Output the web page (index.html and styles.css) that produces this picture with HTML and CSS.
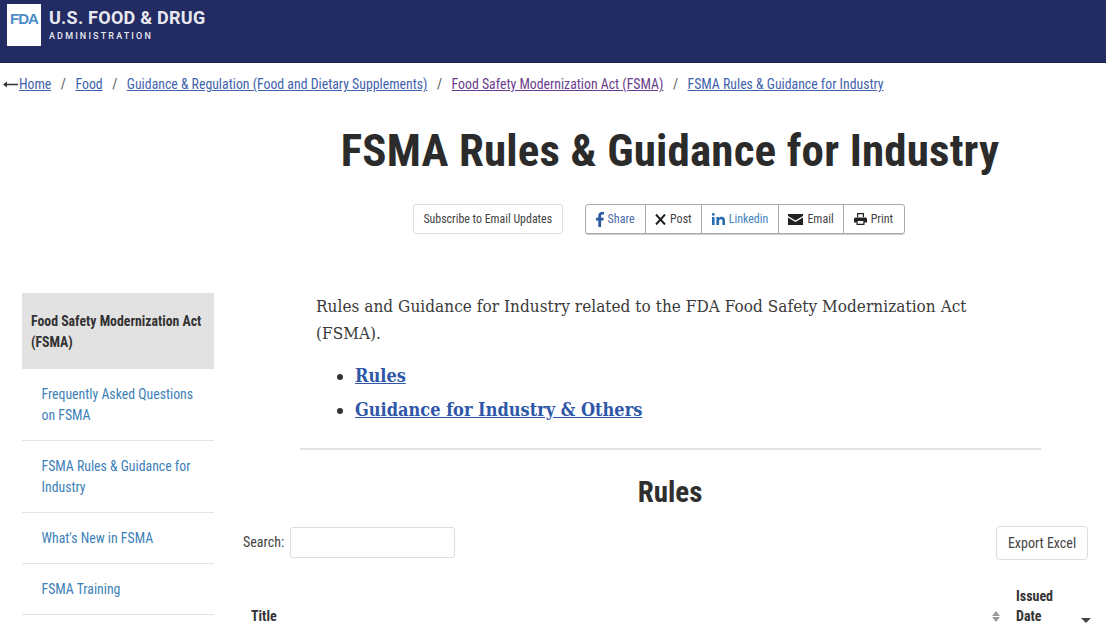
FILE: index.html
```html
<!DOCTYPE html>
<html lang="en">
<head>
  <meta charset="UTF-8">
  <title>FSMA Rules &amp; Guidance for Industry</title>
  <link rel="stylesheet" href="styles.css">
</head>
<body>
  <header class="site-header">
    <div class="logo-box">FDA</div>
    <div class="logo-text">
      <div class="logo-title">U.S. FOOD &amp; DRUG</div>
      <div class="logo-sub">ADMINISTRATION</div>
    </div>
  </header>

  <nav class="breadcrumb">
    <svg class="back-arrow" width="15" height="7" viewBox="0 0 15 7"><path fill="#333" d="M0 3.500L4 .5v2.200h11v1.600H4v2.200z"/></svg>
    <a href="#">Home</a><span class="sep">/</span>
    <a href="#">Food</a><span class="sep">/</span>
    <a href="#">Guidance &amp; Regulation (Food and Dietary Supplements)</a><span class="sep">/</span>
    <a href="#" class="visited">Food Safety Modernization Act (FSMA)</a><span class="sep">/</span>
    <a href="#">FSMA Rules &amp; Guidance for Industry</a>
  </nav>

  <h1 class="page-title">FSMA Rules &amp; Guidance for Industry</h1>

  <div class="share-row">
    <a href="#" class="subscribe">Subscribe to Email Updates</a>
    <div class="share-group">
      <a href="#" class="share-btn blue">
        <svg width="8" height="15" viewBox="0 0 8 15"><path fill="#2b5a9e" d="M2.300 15V8.400H0V5.800h2.300V3.800C2.300 1.400 3.700 0 5.900 0c1 0 1.800.1 2.100.1v2.400H6.500c-1.100 0-1.400.6-1.400 1.400v1.900h2.700l-.4 2.600H5.100V15z"/></svg>
        Share</a>
      <a href="#" class="share-btn">
        <svg width="11" height="11" viewBox="0 0 11 11"><path fill="none" stroke="#222" stroke-width="2" d="M1 .5l9 10M10 .5l-9 10"/></svg>
        Post</a>
      <a href="#" class="share-btn sky">
        <svg width="13" height="12" viewBox="0 0 13 12"><path fill="#2b6cb0" d="M0 4h2.600v8H0zM1.300 0a1.400 1.400 0 1 1 0 2.800 1.400 1.400 0 0 1 0-2.800zM4.400 4h2.500v1.100c.5-.8 1.400-1.300 2.600-1.300 2.600 0 3.500 1.500 3.500 4V12h-2.600V8.300c0-1.200-.3-2.100-1.500-2.100s-1.800.9-1.800 2.100V12H4.400z"/></svg>
        Linkedin</a>
      <a href="#" class="share-btn">
        <svg width="15" height="11" viewBox="0 0 15 11"><path fill="#222" d="M0 0h15v2L7.500 6.500 0 2zM0 3.500l7.500 4.500L15 3.500V11H0z"/></svg>
        Email</a>
      <a href="#" class="share-btn">
        <svg width="13" height="12" viewBox="0 0 13 12"><path fill="#222" d="M3 0h7v4H8.800V1.200H4.200V4H3zM1.500 4.500h10A1.500 1.500 0 0 1 13 6v3.500h-2.500V12h-8V9.500H0V6a1.500 1.500 0 0 1 1.500-1.500zM3.700 8v2.800h5.600V8z"/></svg>
        Print</a>
    </div>
  </div>

  <div class="layout">
    <aside class="side-nav">
      <div class="side-head">Food Safety Modernization Act (FSMA)</div>
      <a href="#" class="side-link">Frequently Asked Questions on FSMA</a>
      <a href="#" class="side-link">FSMA Rules &amp; Guidance for Industry</a>
      <a href="#" class="side-link">What's New in FSMA</a>
      <a href="#" class="side-link">FSMA Training</a>
    </aside>

    <main class="content">
      <p class="intro">Rules and Guidance for Industry related to the FDA Food Safety Modernization Act (FSMA).</p>
      <ul class="jump-list">
        <li><a href="#">Rules</a></li>
        <li><a href="#">Guidance for Industry &amp; Others</a></li>
      </ul>
      <hr class="divider">
      <h2 class="section-title">Rules</h2>
      <div class="table-tools">
        <label class="search-label">Search: <input type="text" class="search-input"></label>
        <button class="export-btn">Export Excel</button>
      </div>
      <div class="table-head">
        <div class="col-title">Title
          <span class="sort-icon"></span>
        </div>
        <div class="col-date">Issued<br>Date
          <span class="sort-down"></span>
        </div>
      </div>
    </main>
  </div>
</body>
</html>
```

FILE: styles.css
```css
html, body {
  height: 625px;
  overflow: hidden;
}

body {
  margin: 0;
  background: #fff;
  color: #333;
  font-family: Roboto, Arial, sans-serif;
  font-stretch: 75%;
}

.site-header {
  display: flex;
  align-items: flex-start;
  gap: 8px;
  height: 63px;
  padding-top: 4px;
  padding-left: 7px;
  box-sizing: border-box;
  background: #232b63;
  border-bottom: 1px solid #1c2350;
}

.logo-box {
  width: 34px;
  height: 42px;
  background: #fff;
  color: #4a8cc7;
  font: 700 15px/29px "Liberation Sans", sans-serif;
  letter-spacing: -1px;
  text-align: center;
}

.logo-text {
  color: #e8e9f0;
  font-stretch: 100%;
}

.logo-title {
  margin-top: 4px;
  font-size: 18px;
  line-height: 20px;
  font-weight: 700;
  letter-spacing: .25px;
}

.logo-sub {
  margin-top: 2px;
  font-size: 9px;
  line-height: 12px;
  font-weight: 500;
  letter-spacing: 2.150px;
}

.breadcrumb {
  display: flex;
  align-items: center;
  height: 20px;
  margin-top: 11px;
  padding-left: 3px;
  font-size: 13.800px;
}

.breadcrumb a {
  color: #3f63ac;
}

.breadcrumb a.visited {
  color: #6a3d8c;
}

.back-arrow {
  margin-right: 1px;
}

.sep {
  margin: 0 9.500px;
  color: #555;
}

.page-title {
  margin: 29px 0 0;
  padding-left: 234px;
  color: #2b2b2b;
  font-size: 45px;
  line-height: 56px;
  font-weight: 700;
  letter-spacing: .15px;
  text-align: center;
}

.share-row {
  display: flex;
  justify-content: center;
  gap: 22px;
  margin-top: 25px;
  padding-left: 212px;
}

.subscribe {
  display: flex;
  align-items: center;
  height: 28px;
  padding: 0 9.500px;
  border: 1px solid #ddd;
  border-radius: 3px;
  color: #444;
  font-size: 11.900px;
  text-decoration: none;
}

.share-group {
  display: flex;
  height: 28px;
  border: 1px solid #aaa;
  border-radius: 3px;
  box-shadow: 0 1px 0 #ccc;
}

.share-btn {
  display: flex;
  align-items: center;
  gap: 4px;
  padding: 0 9.500px;
  border-left: 1px solid #aaa;
  color: #444;
  font-size: 12px;
  text-decoration: none;
}

.share-btn:first-child {
  padding: 0 10px;
  border-left: 0;
}

.share-btn:last-child {
  padding-right: 11px;
}

.share-btn.blue {
  color: #4a6ba8;
}

.share-btn.sky {
  color: #3f86c0;
}

.layout {
  display: flex;
  margin-top: 59px;
  padding-left: 22px;
}

.side-nav {
  flex: none;
  width: 192px;
}

.side-head {
  padding: 18px 4px 16px 9px;
  background: #e2e2e2;
  color: #333;
  font-size: 13.800px;
  line-height: 21px;
  font-weight: 700;
}

.side-link {
  display: block;
  padding: 15px 10px 14px 19.500px;
  border-bottom: 1px solid #e4e4e4;
  color: #3d7fb8;
  font-size: 13.800px;
  line-height: 21px;
  text-decoration: none;
}

.content {
  flex: 1;
  min-width: 0;
  padding: 0 18px 0 29px;
}

.intro {
  margin: 0;
  padding-left: 73px;
  padding-right: 100px;
  color: #3a3a3a;
  font-family: "DejaVu Serif", serif;
  font-stretch: condensed;
  font-size: 17px;
  letter-spacing: .05px;
  line-height: 27px;
}

.jump-list {
  margin: 12px 0 0;
  padding-left: 112px;
  font-family: "DejaVu Serif", serif;
  font-stretch: condensed;
  font-size: 18px;
  font-weight: 700;
  line-height: 34px;
}

.jump-list a {
  color: #2f57a8;
}

.divider {
  margin: 21px 47px 0 57px;
  border: 0;
  border-top: 2px solid #e2e2e2;
}

.section-title {
  margin: 24px 0 0;
  padding-left: 9px;
  color: #2f2f2f;
  font-size: 29px;
  line-height: 36px;
  font-weight: 700;
  text-align: center;
}

.table-tools {
  display: flex;
  justify-content: space-between;
  align-items: center;
  margin-top: 16px;
}

.search-label {
  display: flex;
  align-items: center;
  gap: 6px;
  padding-bottom: 2px;
  color: #444;
  font-size: 14px;
}

.search-input {
  width: 163px;
  height: 29px;
  padding: 0;
  border: 1px solid #ddd;
  border-radius: 3px;
  box-sizing: content-box;
}

.export-btn {
  width: 92px;
  height: 34px;
  padding: 0;
  background: #fff;
  border: 1px solid #ddd;
  border-radius: 4px;
  color: #444;
  font-family: Roboto, Arial, sans-serif;
  font-stretch: 75%;
  font-size: 14px;
}

.table-head {
  display: flex;
  align-items: flex-end;
  margin-top: 26px;
  color: #333;
  font-size: 14px;
  line-height: 20px;
  font-weight: 700;
}

.col-title {
  position: relative;
  flex: 1;
  padding-left: 8px;
}

.col-date {
  position: relative;
  width: 72px;
}

.sort-icon {
  position: absolute;
  right: 16px;
  top: 1px;
  width: 0;
  height: 0;
  border: 4px solid transparent;
  border-bottom: 5px solid #999;
}

.sort-icon::after {
  content: "";
  position: absolute;
  left: -4px;
  top: 6px;
  border: 4px solid transparent;
  border-top: 5px solid #999;
}

.sort-down {
  position: absolute;
  right: -3px;
  bottom: -2px;
  border: 5px solid transparent;
  border-top: 5px solid #444;
}
```
